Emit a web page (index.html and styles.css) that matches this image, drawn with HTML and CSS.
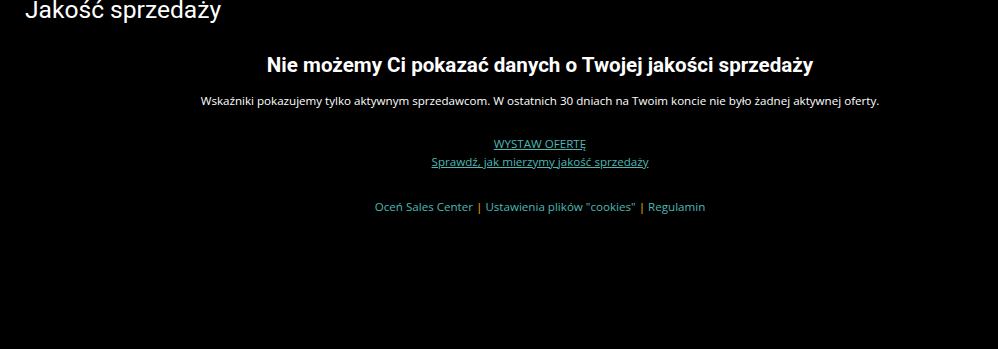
FILE: index.html
```html
<!DOCTYPE html>
<html lang="pl">
<head>
<meta charset="utf-8">
<title>Jakość sprzedaży</title>
<link rel="stylesheet" href="styles.css">
</head>
<body>
<h1 class="page-title">Jakość sprzedaży</h1>
<main class="content">
  <h2 class="empty-title">Nie możemy Ci pokazać danych o Twojej jakości sprzedaży</h2>
  <p class="empty-text">Wskaźniki pokazujemy tylko aktywnym sprzedawcom. W ostatnich 30 dniach na Twoim koncie nie było żadnej aktywnej oferty.</p>
  <div class="links">
    <a href="#" class="link">WYSTAW OFERTĘ</a>
    <a href="#" class="link">Sprawdź, jak mierzymy jakość sprzedaży</a>
  </div>
  <footer class="footer">
    <a href="#" class="footer-link">Oceń Sales Center</a>
    <span class="sep">|</span>
    <a href="#" class="footer-link">Ustawienia plików "cookies"</a>
    <span class="sep">|</span>
    <a href="#" class="footer-link">Regulamin</a>
  </footer>
</main>
</body>
</html>
```
FILE: styles.css
```css
html, body {
  margin: 0;
  padding: 0;
  background: #000;
  height: 100%;
}
body {
  font-family: "Open Sans", "Liberation Sans", sans-serif;
  color: #fff;
}
.page-title {
  margin: 0;
  padding-left: 25px;
  font-family: Roboto, "Liberation Sans", sans-serif;
  font-weight: 400;
  font-size: 24.6px;
  line-height: 20px;
  color: #fff;
}
.content {
  margin-left: 82px;
  text-align: center;
}
.empty-title {
  margin: 33px 0 0;
  font-family: Roboto, "Liberation Sans", sans-serif;
  font-weight: 700;
  font-size: 20.6px;
  line-height: 24px;
}
.empty-text {
  margin: 15px 0 0;
  font-size: 11.6px;
  line-height: 18px;
}
.links {
  margin-top: 25px;
  display: flex;
  flex-direction: column;
  align-items: center;
}
.link {
  font-size: 11.6px;
  line-height: 17px;
  color: #4db8b4;
  text-decoration: underline;
}
.link + .link {
  margin-top: 1px;
}
.footer {
  margin-top: 28px;
  font-size: 11.6px;
  line-height: 18px;
}
.footer-link {
  color: #4db8b4;
  text-decoration: none;
}
.sep {
  color: #f5b400;
}
```
